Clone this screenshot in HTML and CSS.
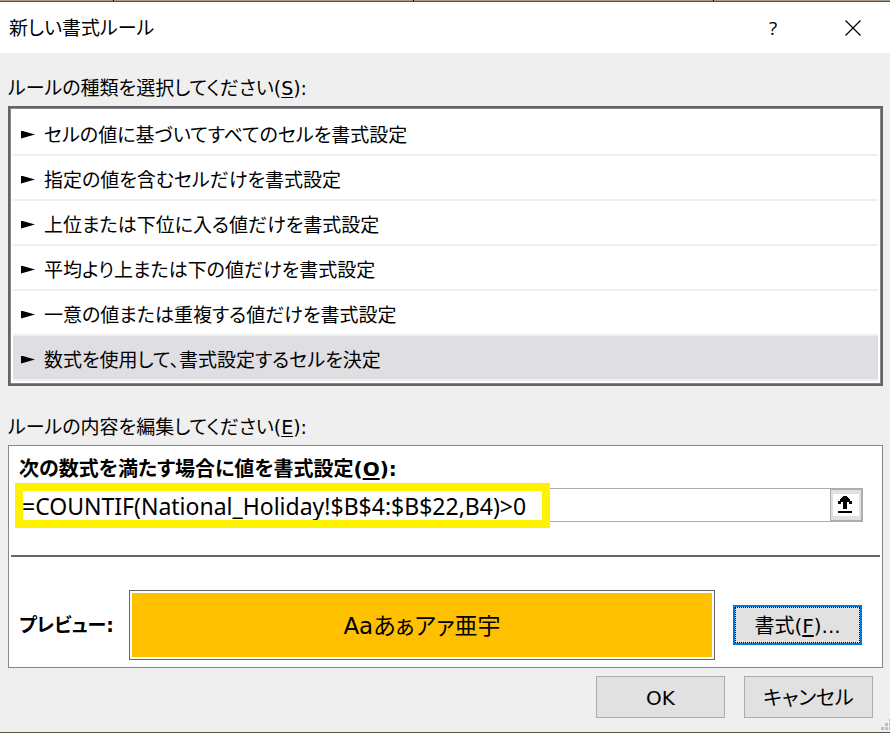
FILE: index.html
```html
<!DOCTYPE html>
<html lang="ja">
<head>
    <meta charset="UTF-8">
    <meta name="viewport" content="width=device-width, initial-scale=1.0">
    <title>新しい書式ルール</title>
    <link rel="stylesheet" href="styles.css">
</head>
<body>
    <div class="sheet-edge"></div>
    <form class="dialog">
        <header class="title-bar">
            <h1 class="title">新しい書式ルール</h1>
            <button class="title-button help" type="button" aria-label="ヘルプ">?</button>
            <button class="title-button" type="button" aria-label="閉じる">
                <svg width="16" height="16" viewBox="0 0 16 16"><path d="M0.5 0.5 L15.5 15.5 M15.5 0.5 L0.5 15.5" stroke="#000" stroke-width="1.2" fill="none"/></svg>
            </button>
        </header>

        <div class="content">
            <fieldset class="rule-group">
                <legend class="section-label">ルールの種類を選択してください(<u>S</u>):</legend>
                <div class="rule-list">
                    <label class="rule"><input type="radio" name="rule">セルの値に基づいてすべてのセルを書式設定</label>
                    <label class="rule"><input type="radio" name="rule">指定の値を含むセルだけを書式設定</label>
                    <label class="rule"><input type="radio" name="rule">上位または下位に入る値だけを書式設定</label>
                    <label class="rule"><input type="radio" name="rule">平均より上または下の値だけを書式設定</label>
                    <label class="rule"><input type="radio" name="rule">一意の値または重複する値だけを書式設定</label>
                    <label class="rule"><input type="radio" name="rule" checked>数式を使用して、書式設定するセルを決定</label>
                </div>
            </fieldset>

            <fieldset class="rule-group">
                <legend class="section-label">ルールの内容を編集してください(<u>E</u>):</legend>
                <div class="panel">
                    <div class="formula">
                        <label class="bold-label" for="formula">次の数式を満たす場合に値を書式設定(<u>O</u>):</label>
                        <div class="formula-row">
                            <input class="formula-input" id="formula" type="text" value="=COUNTIF(National_Holiday!$B$4:$B$22,B4)&gt;0">
                            <button class="collapse-button" type="button" aria-label="ダイアログを折りたたむ">
                                <svg width="26" height="22" viewBox="0 0 26 22" shape-rendering="crispEdges"><path fill="#fff" d="M0 0h26v22H0z"/><path d="M10 2h4v1h1v1h1v1h1v2h2v3h-3V8h-2v7h-4V8H8v2H5V7h2V5h1V4h1V3h1zM5 17h14v2H5z"/></svg>
                            </button>
                            <span class="highlight"></span>
                        </div>
                    </div>
                    <div class="preview-row">
                        <span class="bold-label">プレビュー:</span>
                        <div class="preview"><div class="sample">Aaあぁアァ亜宇</div></div>
                        <button class="button focused" type="button">書式(<u>F</u>)...</button>
                    </div>
                </div>
            </fieldset>

            <footer class="actions">
                <button class="button" type="submit">OK</button>
                <button class="button" type="button">キャンセル</button>
            </footer>
        </div>
        <svg class="grip" width="9" height="11" viewBox="0 0 9 11" shape-rendering="crispEdges"><path fill="#bfbfbf" d="M0 8h3v3H0zM4 8h3v3H4zM4 4h3v3H4zM8 8h1v3H8zM8 4h1v3H8zM8 0h1v3H8z"/></svg>
    </form>
</body>
</html>
```
FILE: styles.css
```css
* {
    box-sizing: border-box;
}

body {
    margin: 0;
    background-color: #efefef;
    color: #000;
    font-family: "DejaVu Sans", "Noto Sans CJK JP", sans-serif;
    font-size: 19px;
    line-height: 28px;
    font-feature-settings: "palt";
}

button,
input {
    font: inherit;
    font-feature-settings: inherit;
    color: inherit;
}

u {
    text-underline-offset: 2px;
}

/* strip of the worksheet above the dialog, with its column lines */
.sheet-edge {
    height: 2px;
    background: linear-gradient(to right, #a99a8c 299px, #000 299px) -186px 0 / 300px 2px;
    border-bottom: 1px solid #5b4f49;
}

.dialog {
    position: relative;
    min-height: calc(100vh - 2px);
    border-bottom: 1px solid #4e5a44;
}

.title-bar {
    display: flex;
    align-items: center;
    height: 51px;
    padding: 0 9px;
    background-color: #fff;
}

.title {
    flex: 1;
    margin: 0;
    font-size: 19px;
    font-weight: normal;
}

.title-button {
    display: flex;
    align-items: center;
    justify-content: center;
    width: 56px;
    height: 50px;
    padding: 0;
    border: 0;
    background: none;
}

.help {
    margin-right: 24px;
    font-family: "Open Sans", sans-serif;
}

.content {
    padding: 20px 7px 0 8px;
}

.rule-group {
    min-width: 0;
    margin: 0 0 26px;
    padding: 0;
    border: 0;
}

.rule-group + .rule-group {
    margin-bottom: 8px;
}

.section-label {
    height: 33px;
    padding: 1px 0 0;
}

.rule-list {
    padding: 3px;
    border: 2px solid #646464;
    background-color: #fff;
    box-shadow: inset 0 0 0 1px #838790;
}

.rule {
    display: flex;
    align-items: center;
    height: 45px;
    padding: 4px 8px 0;
    border-bottom: 2px solid #efefef;
}

.rule:has(input:checked) {
    background-color: #dfdee3;
}

.rule input {
    appearance: none;
    width: 14px;
    height: 8px;
    margin: 0 9px 0 0;
    background-color: #000;
    clip-path: polygon(0 0, 100% 50%, 0 100%);
}

.panel {
    border: 1px solid #838790;
    background-color: #fff;
}

.formula {
    margin: 0 2px;
    padding: 9px 17px 33px 8px;
    border-bottom: 2px solid #646464;
}

.bold-label {
    font-weight: bold;
}

.formula .bold-label {
    display: block;
    height: 33px;
    font-size: 20px;
}

.formula-row {
    position: relative;
    display: flex;
}

.formula-input {
    flex: 1;
    min-width: 0;
    height: 34px;
    padding: 1px 2px 0;
    border: 1px solid #acacac;
    border-right: 0;
    outline: 0;
    font-family: "Noto Sans", sans-serif;
    font-size: 23px;
}

.collapse-button {
    display: flex;
    align-items: center;
    justify-content: center;
    width: 33px;
    height: 34px;
    padding: 0;
    border: 2px solid #adadad;
    border-left-width: 1px;
    background-color: #e1e1e1;
}

/* marker box drawn over the formula */
.highlight {
    position: absolute;
    top: -5px;
    left: -4px;
    width: 535px;
    height: 45px;
    border: 8px solid #fff200;
    pointer-events: none;
}

.preview-row {
    display: flex;
    align-items: center;
    padding: 33px 20px 7px 10px;
}

.preview-row .bold-label {
    width: 110px;
}

.preview {
    flex: 1;
    margin-right: 18px;
    padding: 2px;
    border: 1px solid #646464;
}

.sample {
    height: 64px;
    background-color: #ffc000;
    font-size: 23px;
    line-height: 66px;
    text-align: center;
}

.button {
    width: 129px;
    height: 42px;
    padding: 2px 0 0;
    border: 1px solid #adadad;
    background-color: #e1e1e1;
    font-size: 20px;
}

.focused {
    height: 40px;
    border: 2px solid #0078d7;
    outline: 1px dotted #000;
    outline-offset: -3px;
}

.actions {
    display: flex;
    justify-content: flex-end;
    gap: 19px;
    padding-right: 10px;
}

.grip {
    position: absolute;
    right: 0;
    bottom: 2px;
}
```
